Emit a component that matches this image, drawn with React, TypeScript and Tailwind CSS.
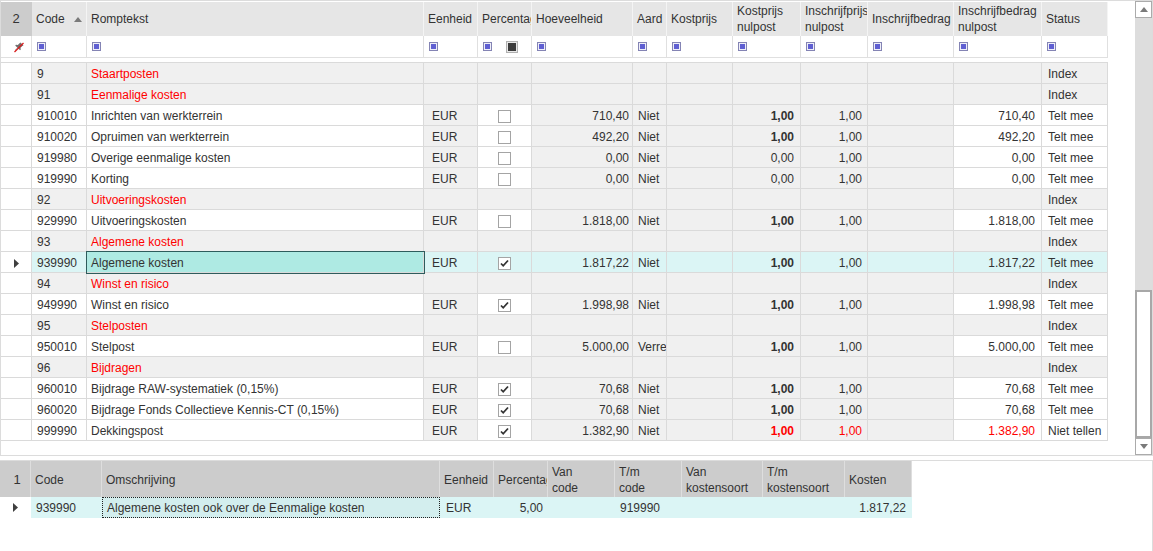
import React from 'react'

type Row = {
  code: string
  text: string
  group?: boolean
  pct?: boolean
  qty?: string
  aard?: string
  kpn?: string
  kpnBold?: boolean
  ibn?: string
  status: string
  red?: boolean
  selected?: boolean
}

const ROWS: Row[] = [
  { code: '9', text: 'Staartposten', group: true, status: 'Index' },
  { code: '91', text: 'Eenmalige kosten', group: true, status: 'Index' },
  { code: '910010', text: 'Inrichten van werkterrein', qty: '710,40', aard: 'Niet', kpn: '1,00', kpnBold: true, ibn: '710,40', status: 'Telt mee' },
  { code: '910020', text: 'Opruimen van werkterrein', qty: '492,20', aard: 'Niet', kpn: '1,00', kpnBold: true, ibn: '492,20', status: 'Telt mee' },
  { code: '919980', text: 'Overige eenmalige kosten', qty: '0,00', aard: 'Niet', kpn: '0,00', ibn: '0,00', status: 'Telt mee' },
  { code: '919990', text: 'Korting', qty: '0,00', aard: 'Niet', kpn: '0,00', ibn: '0,00', status: 'Telt mee' },
  { code: '92', text: 'Uitvoeringskosten', group: true, status: 'Index' },
  { code: '929990', text: 'Uitvoeringskosten', qty: '1.818,00', aard: 'Niet', kpn: '1,00', kpnBold: true, ibn: '1.818,00', status: 'Telt mee' },
  { code: '93', text: 'Algemene kosten', group: true, status: 'Index' },
  { code: '939990', text: 'Algemene kosten', pct: true, qty: '1.817,22', aard: 'Niet', kpn: '1,00', kpnBold: true, ibn: '1.817,22', status: 'Telt mee', selected: true },
  { code: '94', text: 'Winst en risico', group: true, status: 'Index' },
  { code: '949990', text: 'Winst en risico', pct: true, qty: '1.998,98', aard: 'Niet', kpn: '1,00', kpnBold: true, ibn: '1.998,98', status: 'Telt mee' },
  { code: '95', text: 'Stelposten', group: true, status: 'Index' },
  { code: '950010', text: 'Stelpost', qty: '5.000,00', aard: 'Verrekenen', kpn: '1,00', kpnBold: true, ibn: '5.000,00', status: 'Telt mee' },
  { code: '96', text: 'Bijdragen', group: true, status: 'Index' },
  { code: '960010', text: 'Bijdrage RAW-systematiek (0,15%)', pct: true, qty: '70,68', aard: 'Niet', kpn: '1,00', kpnBold: true, ibn: '70,68', status: 'Telt mee' },
  { code: '960020', text: 'Bijdrage Fonds Collectieve Kennis-CT (0,15%)', pct: true, qty: '70,68', aard: 'Niet', kpn: '1,00', kpnBold: true, ibn: '70,68', status: 'Telt mee' },
  { code: '999990', text: 'Dekkingspost', pct: true, qty: '1.382,90', aard: 'Niet', kpn: '1,00', kpnBold: true, ibn: '1.382,90', status: 'Niet tellen', red: true },
]

const topCols = 'grid grid-cols-[31px_55px_337px_54px_54px_101px_34px_66px_68px_67px_86px_88px_66px]'
const botCols = 'grid grid-cols-[31px_71px_338px_54px_54px_67px_67px_81px_82px_67px]'

// which columns are white in a normal detail row
const WHITE = [true, true, true, false, true, false, false, false, false, false, false, true, true]

function FilterIcon() {
  return (
    <svg width="9" height="9" viewBox="0 0 9 9">
      <rect x="0.5" y="0.5" width="8" height="8" fill="#eeeef8" stroke="#8484b4" />
      <rect x="2" y="2" width="5" height="5" fill="#5f5fd2" />
    </svg>
  )
}

function ClearFilterIcon() {
  return (
    <svg width="12" height="12" viewBox="0 0 12 12">
      <path d="M7.5 1.5l3 3-1.2 0.4-1.8 1.8 0.3 1.8-0.8 0.8-2.2-2.2-2.3 2.3-0.4-0.4 2.3-2.3-2.2-2.2 0.8-0.8 1.8 0.3 1.8-1.8z" fill="#707070" />
      <line x1="1.5" y1="11" x2="10.5" y2="2" stroke="#d81c1c" strokeWidth="1.2" />
    </svg>
  )
}

function CheckBox({ checked }: { checked?: boolean }) {
  return (
    <div className="w-[13px] h-[13px] border border-[#a4a4a4] bg-white flex items-center justify-center">
      {checked && (
        <svg width="9" height="9" viewBox="0 0 9 9">
          <path d="M1 4.5l2.2 2.3L8 1.5" fill="none" stroke="#333" strokeWidth="1.8" />
        </svg>
      )}
    </div>
  )
}

function RowPointer() {
  return (
    <svg width="5" height="9" viewBox="0 0 5 9">
      <path d="M0 0l5 4.5L0 9z" fill="#3f3f3f" />
    </svg>
  )
}

function Arrow({ down }: { down?: boolean }) {
  return (
    <svg width="8" height="5" viewBox="0 0 8 5">
      <path d={down ? 'M0 0h8L4 5z' : 'M0 5h8L4 0z'} fill="#7a7a7a" />
    </svg>
  )
}

function HeaderCell({ children, first }: { children?: React.ReactNode; first?: boolean }) {
  return (
    <div
      className={
        'h-[34px] flex items-center leading-[16px] overflow-hidden whitespace-nowrap border-r ' +
        (first ? 'bg-[#cccccc] justify-center border-[#cccccc] text-[13px]' : 'bg-[#e6e6e6] pl-[4px] border-[#f4f4f4]')
      }
    >
      {children}
    </div>
  )
}

function DataRow({ r }: { r: Row }) {
  const bg = (i: number) => {
    if (i === 0) return 'bg-white'
    if (r.selected) return 'bg-[#dbf5f5]'
    if (r.group) return 'bg-[#f0f0f0]'
    return WHITE[i] ? 'bg-white' : 'bg-[#f0f0f0]'
  }
  const cell = 'h-[21px] pt-[2px] border-r border-b border-[#dadada] flex items-center overflow-hidden whitespace-nowrap '
  const red = r.red ? 'text-[#ff0000]' : ''
  return (
    <div className={topCols}>
      <div className={cell + bg(0) + ' justify-center pt-0'}>{r.selected && <RowPointer />}</div>
      <div className={cell + bg(1) + ' pl-[5px]'}>{r.code}</div>
      {r.selected ? (
        <div className={cell + 'bg-[#aeeae3] pl-[4px] relative z-10 outline outline-1 outline-[#2e5c5c]'}>{r.text}</div>
      ) : (
        <div className={cell + bg(2) + ' pl-[4px] ' + (r.group ? 'text-[#ff0000]' : '')}>{r.text}</div>
      )}
      <div className={cell + bg(3) + ' pl-[8px]'}>{r.group ? '' : 'EUR'}</div>
      <div className={cell + bg(4) + ' justify-center pt-0'}>{!r.group && <CheckBox checked={r.pct} />}</div>
      <div className={cell + bg(5) + ' justify-end pr-[3px]'}>{r.qty}</div>
      <div className={cell + bg(6) + ' pl-[5px]'}>{r.aard}</div>
      <div className={cell + bg(7)}></div>
      <div className={cell + bg(8) + ' justify-end pr-[6px] ' + (r.kpnBold ? 'font-bold ' : '') + red}>{r.kpn}</div>
      <div className={cell + bg(9) + ' justify-end pr-[5px] ' + red}>{r.group ? '' : '1,00'}</div>
      <div className={cell + bg(10)}></div>
      <div className={cell + bg(11) + ' justify-end pr-[6px] ' + red}>{r.ibn}</div>
      <div className={cell + bg(12) + ' pl-[6px]'}>{r.status}</div>
    </div>
  )
}

function Scrollbar() {
  return (
    <div className="w-[17px] flex flex-col bg-[#dddddd]">
      <div className="h-[17px] bg-white border border-[#ababab] flex items-center justify-center">
        <Arrow />
      </div>
      <div className="flex-1" />
      <div className="h-[148px] bg-white border-2 border-[#a8a8a8]" />
      <div className="h-[17px] bg-white border border-[#ababab] flex items-center justify-center">
        <Arrow down />
      </div>
    </div>
  )
}

export default function App() {
  const filterCell = 'h-[22px] border-r border-b border-[#e0e0e0] bg-white flex items-center pl-[5px] gap-[14px]'
  const botHead = 'h-[36px] bg-[#cccccc] border-r border-[#dedede] flex items-center pl-[4px] pt-[1px] leading-[16px] overflow-hidden whitespace-nowrap'
  return (
    <div className="w-[1153px] h-[551px] bg-white text-[12px] text-[#333333] font-['Liberation_Sans',Arial,sans-serif] overflow-hidden">
      {/* ── Top grid ─────────────────────────────────────────────── */}
      <div className="h-[456px] border border-[#dcdcdc] flex">
        <div className="flex-1 pt-[1px]">
          <div className={topCols}>
            <HeaderCell first>2</HeaderCell>
            <HeaderCell>
              <span>Code</span>
              <span className="ml-auto mr-[4px]"><Arrow /></span>
            </HeaderCell>
            <HeaderCell>Romptekst</HeaderCell>
            <HeaderCell>Eenheid</HeaderCell>
            <HeaderCell>Percentage</HeaderCell>
            <HeaderCell>Hoeveelheid</HeaderCell>
            <HeaderCell>Aard</HeaderCell>
            <HeaderCell>Kostprijs</HeaderCell>
            <HeaderCell><span>Kostprijs<br />nulpost</span></HeaderCell>
            <HeaderCell><span>Inschrijfprijs<br />nulpost</span></HeaderCell>
            <HeaderCell>Inschrijfbedrag</HeaderCell>
            <HeaderCell><span>Inschrijfbedrag<br />nulpost</span></HeaderCell>
            <HeaderCell>Status</HeaderCell>
          </div>

          {/* filter row */}
          <div className={topCols}>
            <div className={filterCell + ' justify-center pl-0'}><ClearFilterIcon /></div>
            {Array.from({ length: 12 }).map((_, i) => (
              <div key={i} className={filterCell}>
                <FilterIcon />
                {i === 3 && (
                  <div className="w-[12px] h-[12px] border-2 border-[#b0b0b0] bg-[#3c3c3c] outline outline-1 outline-[#e8e8e8] -outline-offset-2" />
                )}
              </div>
            ))}
          </div>
          <div className="w-[1107px] h-[5px] border-b border-[#dadada]" />

          {ROWS.map(r => <DataRow key={r.code} r={r} />)}
        </div>
        <Scrollbar />
      </div>

      {/* ── Bottom grid ──────────────────────────────────────────── */}
      <div className="mt-[4px] h-[91px] border-t border-r border-[#dcdcdc]">
        <div className={botCols}>
          <div className={botHead + ' justify-center pl-0 text-[13px]'}>1</div>
          <div className={botHead}>Code</div>
          <div className={botHead}>Omschrijving</div>
          <div className={botHead}>Eenheid</div>
          <div className={botHead}>Percentage</div>
          <div className={botHead}><span>Van<br />code</span></div>
          <div className={botHead}><span>T/m<br />code</span></div>
          <div className={botHead}><span>Van<br />kostensoort</span></div>
          <div className={botHead}><span>T/m<br />kostensoort</span></div>
          <div className={botHead}>Kosten</div>
        </div>
        <div className={botCols + ' h-[21px]'}>
          <div className="bg-white flex items-center justify-center"><RowPointer /></div>
          <div className="bg-[#dbf5f5] flex items-center pl-[5px]">939990</div>
          <div className="bg-[#d3eeee] border border-dotted border-[#222] flex items-center pl-[4px] whitespace-nowrap overflow-hidden">
            Algemene kosten ook over de Eenmalige kosten
          </div>
          <div className="bg-[#dbf5f5] flex items-center pl-[6px]">EUR</div>
          <div className="bg-[#dbf5f5] flex items-center justify-end pr-[5px]">5,00</div>
          <div className="bg-[#dbf5f5]" />
          <div className="bg-[#dbf5f5] flex items-center pl-[5px]">919990</div>
          <div className="bg-[#dbf5f5]" />
          <div className="bg-[#dbf5f5]" />
          <div className="bg-[#dbf5f5] flex items-center justify-end pr-[6px]">1.817,22</div>
        </div>
      </div>
    </div>
  )
}
